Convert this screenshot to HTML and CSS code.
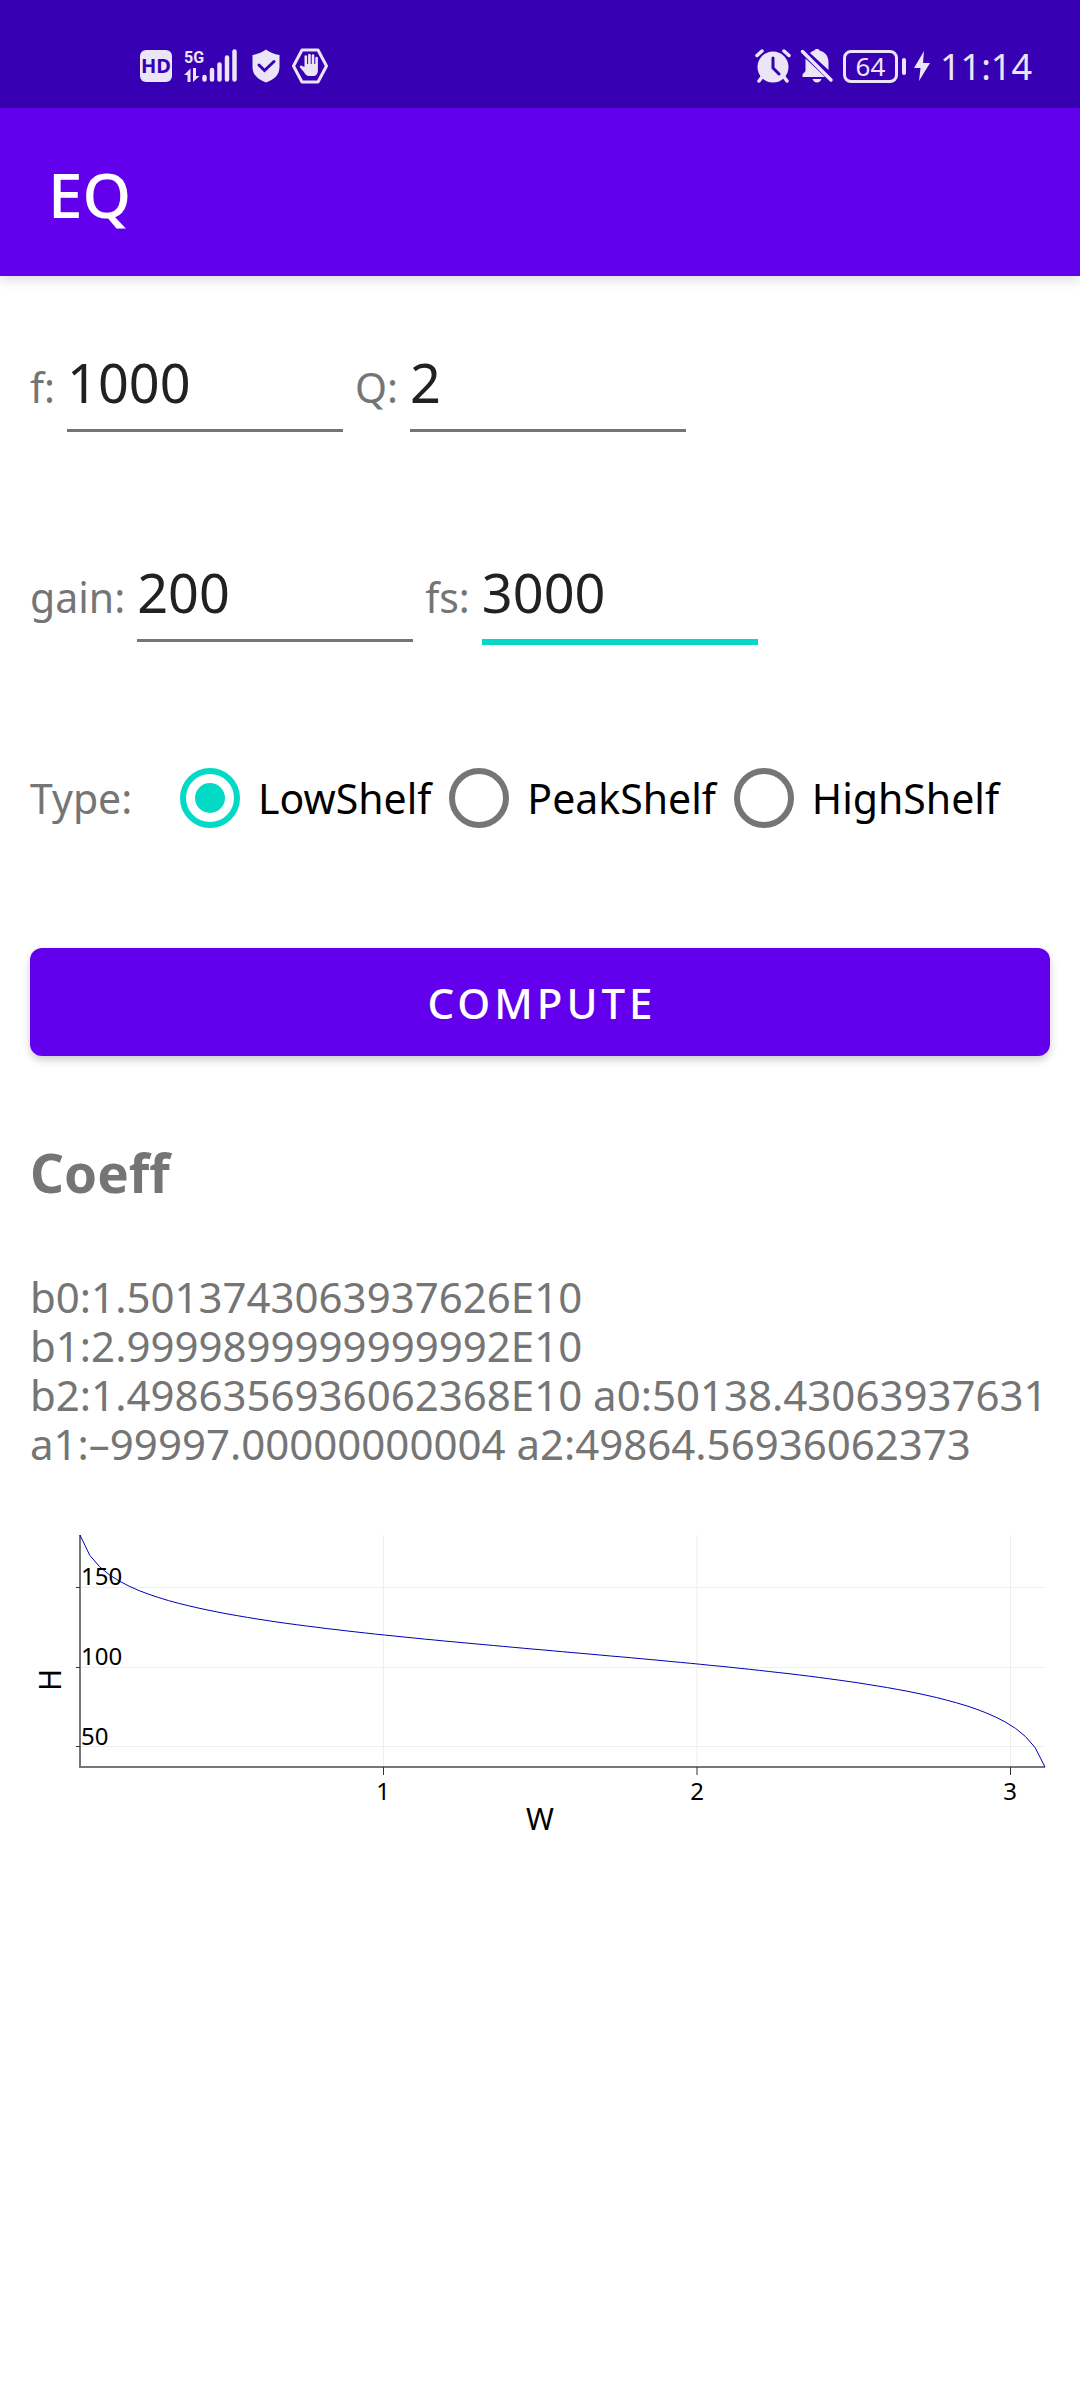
FILE: index.html
```html
<!DOCTYPE html>
<html lang="en">
<head>
<meta charset="utf-8">
<meta name="viewport" content="width=device-width, initial-scale=1">
<title>EQ</title>
<link rel="stylesheet" href="styles.css">
</head>
<body>
<div class="status-bar">
  <div class="status-group">
    <span class="hd">HD</span>
    <svg class="signal" width="56" height="36" viewBox="0 0 56 36" aria-label="5G signal">
      <text class="signal-text" x="0" y="15">5G</text>
      <path d="M0 27l6.500-6.500V34h-3V27zM15.500 28l-6.500 6V20h3v8z"/>
      <path d="M20.500 29v2.500M28 22v9.500M35.500 16.500v15M43 9.500v22M50.500 3.500v28" fill="none" stroke="currentColor" stroke-width="4.500" stroke-linecap="round"/>
    </svg>
    <svg width="28" height="34" viewBox="0 0 28 34" aria-hidden="true">
      <path d="M14 .5c4 3 8 4.500 13.500 5.500v12c0 8-5.500 12.500-13.500 15.500C6 30.500.5 26 .5 18V6C6 5 10 3.500 14 .5z"/>
      <path class="cut-line" d="M7 16l5.500 5.500L22 12.500"/>
    </svg>
    <svg width="36" height="36" viewBox="0 0 36 36" aria-hidden="true">
      <path d="M10 2h16l8.500 16L26 34H10L1.500 18z" fill="none" stroke="currentColor" stroke-width="3" stroke-linejoin="round"/>
      <path d="M12.500 19V8.500a1.300 1.300 0 0 1 2.600 0V16h1V7a1.300 1.300 0 0 1 2.600 0v9h1V7.500a1.300 1.300 0 0 1 2.600 0V16h1v-6a1.300 1.300 0 0 1 2.600 0v12c0 4-2 6-4.500 6h-4c-3 0-4-1.500-5.500-4L8 19.500c-.8-1.500 1-2.500 2-1.500z"/>
    </svg>
  </div>
  <div class="status-group status-right">
    <svg width="36" height="34" viewBox="0 0 36 34" aria-hidden="true">
      <circle cx="18" cy="18" r="15.500"/>
      <path d="M2 6.500l5-4.500M34 6.500L29 2M7 28l-3 4M29 28l3 4" fill="none" stroke="currentColor" stroke-width="3.500" stroke-linecap="round"/>
      <path class="cut-line" d="M18 9v10l6 6"/>
    </svg>
    <svg width="32" height="36" viewBox="0 0 32 36" aria-hidden="true">
      <path d="M9 5c1.500-1.500 3-2.500 4.500-2.500 0-1 1-1.500 2.500-1.500s2.500.5 2.500 1.500C24 4 27.500 8 27.500 14v8zM4.500 10.500L24 29H1.500v-2.500L4.500 23zM11.500 31h9c-1 2.500-2.500 3.500-4.500 3.500s-3.500-1-4.500-3.500z"/>
      <path d="M1.500 3.500L30 32" fill="none" stroke="currentColor" stroke-width="3.500" stroke-linecap="round"/>
    </svg>
    <span class="battery">
      <span class="battery-level">64</span>
      <svg class="bolt" width="16" height="30" viewBox="0 0 16 30" aria-hidden="true"><path d="M10 0L0 17h6.500L5 30 16 12H9z"/></svg>
    </span>
    <span class="clock">11:14</span>
  </div>
</div>
<header class="app-bar"><h1 class="app-title">EQ</h1></header>
<main class="content">
  <div class="fields">
    <label for="freq">f:</label><input class="number" id="freq" type="text" inputmode="decimal" value="1000">
    <label for="quality">Q:</label><input class="number" id="quality" type="text" inputmode="decimal" value="2">
  </div>
  <div class="fields">
    <label for="gain">gain:</label><input class="number" id="gain" type="text" inputmode="decimal" value="200">
    <label for="rate">fs:</label><input class="number number-active" id="rate" type="text" inputmode="decimal" value="3000">
  </div>
  <div class="types" role="radiogroup" aria-labelledby="type-label">
    <span class="type-label" id="type-label">Type:</span>
    <label class="option"><input class="radio" type="radio" name="type" checked>LowShelf</label>
    <label class="option"><input class="radio" type="radio" name="type">PeakShelf</label>
    <label class="option"><input class="radio" type="radio" name="type">HighShelf</label>
  </div>
  <button class="compute" type="button">COMPUTE</button>
  <h2 class="heading">Coeff</h2>
  <p class="coeffs">b0:1.5013743063937626E10<br>b1:2.9999899999999992E10<br>b2:1.4986356936062368E10 a0:50138.43063937631<br>a1:–99997.00000000004 a2:49864.56936062373</p>
  <svg class="chart" viewBox="0 0 1020 316" role="img" aria-label="Frequency response">
    <path class="grid" d="M353.500 12v232M667 12v232M980.500 12v232M50 64.500h965M50 144.500h965M50 223.500h965"/>
    <path class="axis" d="M50 12v232h965"/>
    <path class="tick" d="M46 64.500h4M46 144.500h4M46 223.500h4M353.500 244v8M667 244v8M980.500 244v8"/>
    <path class="curve" id="curve"/>
    <g class="tick-text">
      <text x="51" y="62">150</text><text x="51" y="142">100</text><text x="51" y="222">50</text>
      <g text-anchor="middle"><text x="353" y="277">1</text><text x="667" y="277">2</text><text x="980" y="277">3</text></g>
    </g>
    <g class="axis-text" text-anchor="middle">
      <text x="510" y="307">W</text>
      <text transform="translate(31 157) rotate(-90)">H</text>
    </g>
  </svg>
</main>
<script src="chart.js"></script>
</body>
</html>
```
FILE: styles.css
```css
* { box-sizing: border-box; }
body {
  margin: 0;
  background: #fff;
  color: #757575;
  font-family: "Noto Sans", "Open Sans", sans-serif;
  font-size: 42px;
  line-height: 49px;
}
.status-bar {
  display: flex;
  justify-content: space-between;
  height: 108px;
  padding: 24px 48px 0 140px;
  background: #3700b3;
  color: #ebe5f7;
}
.status-group { display: flex; align-items: center; gap: 12px; }
.status-group svg { display: block; overflow: visible; fill: currentColor; }
.status-group .cut-line { fill: none; stroke: #3700b3; stroke-width: 3; stroke-linecap: round; }
.status-right { gap: 10px; }
.hd {
  width: 32px;
  border-radius: 6px;
  background: #ebe5f7;
  color: #3700b3;
  font-size: 20px;
  font-weight: 700;
  line-height: 32px;
  text-align: center;
}
.signal-text { font-family: Roboto, sans-serif; font-size: 16px; font-weight: 700; }
.battery { display: flex; align-items: center; gap: 4px; }
.battery-level {
  width: 55px;
  border: 3px solid currentColor;
  border-radius: 8px;
  font-size: 26px;
  line-height: 27px;
  text-align: center;
}
.battery::after { content: ""; width: 4px; height: 17px; border-radius: 2px; background: currentColor; }
.bolt { order: 1; margin-left: 4px; }
.clock { font-size: 36px; }
.app-bar {
  display: flex;
  align-items: center;
  height: 168px;
  padding: 4px 48px 0;
  background: #6200ee;
  color: #fff;
  box-shadow: 0 3px 12px rgba(0, 0, 0, .16);
}
.app-title { margin: 0; font-size: 62px; font-weight: 500; line-height: 72px; }
.content { padding: 72px 30px; }
.fields { display: flex; align-items: baseline; gap: 12px; margin-bottom: 126px; font-size: 41px; }
.number {
  width: 276px;
  height: 84px;
  padding: 0 0 13px;
  border: 0;
  border-bottom: 3px solid #757575;
  background: none;
  color: #212121;
  font: inherit;
  font-size: 54px;
  outline: 0;
}
.number-active { height: 87px; border-bottom: 6px solid #03dac5; }
.fields + .types { margin-top: -21px; }
.types { display: flex; align-items: center; gap: 18px; height: 96px; font-size: 41px; }
.type-label { width: 132px; }
.option { display: flex; align-items: center; gap: 18px; color: #000; }
.radio {
  appearance: none;
  display: grid;
  place-items: center;
  width: 60px;
  height: 60px;
  margin: 0;
  border: 6px solid #757575;
  border-radius: 50%;
}
.radio:checked { border-color: #03dac5; }
.radio:checked::before { content: ""; width: 30px; height: 30px; border-radius: 50%; background: #03dac5; }
.compute {
  display: block;
  width: 100%;
  height: 108px;
  margin: 102px 0 81px;
  padding: 0 0 0 4px;
  border: 0;
  border-radius: 12px;
  background: #6200ee;
  color: #fff;
  font: inherit;
  font-weight: 500;
  letter-spacing: 4px;
  box-shadow: 0 4px 8px rgba(0, 0, 0, .2);
}
.heading { margin: 0 0 63px; font-size: 53px; font-weight: 700; line-height: 72px; }
.coeffs { margin: 0 0 55px; }
.chart { display: block; width: 100%; overflow: visible; }
.chart path { fill: none; }
.chart .grid { stroke: #eee; stroke-width: 1; }
.chart .axis { stroke: #777; stroke-width: 2; }
.chart .tick { stroke: #333; stroke-width: 1; }
.chart .curve { stroke: #0000b4; stroke-width: 1; }
.tick-text { fill: #000; font-size: 24px; }
.axis-text { fill: #000; font-size: 30px; }
```
FILE: chart.js
```js
// Magnitude response of the biquad in dB, sampled every pi/100.
const b = [1.5013743063937626e10, 2.9999899999999992e10, 1.4986356936062368e10];
const a = [50138.43063937631, -99997.00000000004, 49864.56936062373];

function magnitude(c, w) {
  const re = c[0] + c[1] * Math.cos(w) + c[2] * Math.cos(2 * w);
  const im = c[1] * Math.sin(w) + c[2] * Math.sin(2 * w);
  return Math.hypot(re, im);
}

const step = Math.PI / 100;
const levels = [];
for (let k = 1; k < 100; k++) {
  levels.push(20 * Math.log10(magnitude(b, k * step) / magnitude(a, k * step)));
}
const max = Math.max(...levels);
const min = Math.min(...levels);
const points = levels.map((v, i) => {
  const x = 50 + (i / (levels.length - 1)) * 965;
  const y = 12 + ((max - v) / (max - min)) * 232;
  return x.toFixed(1) + " " + y.toFixed(1);
});
document.getElementById("curve").setAttribute("d", "M" + points.join("L"));
```
